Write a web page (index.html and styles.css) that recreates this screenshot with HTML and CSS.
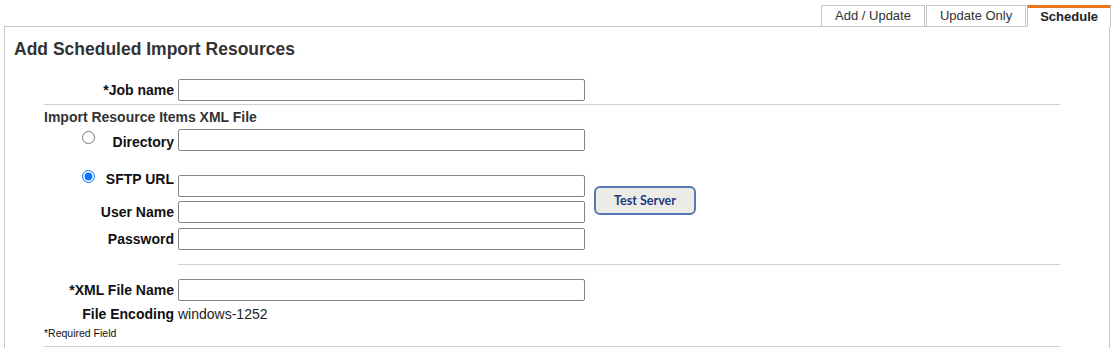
FILE: index.html
```html
<!DOCTYPE html>
<html>
<head>
<meta charset="utf-8">
<link rel="stylesheet" href="styles.css">
</head>
<body>
<div class="tabs">
  <div class="tab">Add / Update</div>
  <div class="tab">Update Only</div>
  <div class="tab active">Schedule</div>
</div>
<div class="panel">
  <h1 class="title">Add Scheduled Import Resources</h1>
  <div class="form">
    <div class="row row-job">
      <label class="lbl">*Job name</label>
      <input class="inp" type="text">
    </div>
    <div class="sep"></div>
    <div class="section">Import Resource Items XML File</div>
    <div class="row row-dir">
      <label class="lbl radio-lbl"><input class="radio" type="radio" name="src"><span>Directory</span></label>
      <input class="inp" type="text">
    </div>
    <div class="sftp">
      <label class="lbl radio-lbl sftp-lbl"><input class="radio" type="radio" name="src" checked><span>SFTP URL</span></label>
      <input class="inp sftp-inp" type="text">
      <label class="lbl user-lbl">User Name</label>
      <input class="inp user-inp" type="text">
      <label class="lbl pass-lbl">Password</label>
      <input class="inp pass-inp" type="password">
      <button class="btn" type="button">Test Server</button>
    </div>
    <div class="sep sep-short"></div>
    <div class="row row-xml">
      <label class="lbl">*XML File Name</label>
      <input class="inp" type="text">
    </div>
    <div class="row row-enc">
      <span class="lbl">File Encoding</span>
      <span class="val">windows-1252</span>
    </div>
    <div class="req">*Required Field</div>
    <div class="sep sep-bottom"></div>
  </div>
</div>
</body>
</html>
```

FILE: styles.css
```css
* { box-sizing: border-box; }
body {
  margin: 0;
  font-family: "Liberation Sans", Arial, sans-serif;
  font-size: 13px;
  color: #000;
  background: #fff;
}
.tabs {
  display: flex;
  justify-content: flex-end;
  padding-right: 3px;
  margin-top: 5px;
  position: relative;
  z-index: 1;
  margin-bottom: -1px;
}
.tab {
  height: 22px;
  padding: 0 13px;
  border: 1px solid #c8c8c8;
  line-height: 20px;
  color: #333;
  background: #fff;
  margin-left: 1px;
}
.tab.active {
  border-top: 3px solid #e8761e;
  border-bottom-color: #fff;
  line-height: 17px;
  font-weight: bold;
  color: #222;
  padding: 0 12px 1px;
}
.panel {
  margin: 0 4px;
  border: 1px solid #c8c8c8;
  border-bottom: none;
  height: 330px;
}
.title {
  margin: 11px 0 0 9px;
  font-size: 17.5px;
  line-height: 22px;
  font-weight: bold;
  color: #333;
}
.form {
  margin-left: 39px;
  width: 1016px;
}
.row {
  display: grid;
  grid-template-columns: 130px 407px;
  column-gap: 4px;
  align-items: center;
}
.lbl {
  font-size: 14px;
  font-weight: bold;
  text-align: right;
  line-height: 16px;
  color: #111;
}
.inp {
  height: 22px;
  width: 407px;
  border: 1px solid #858585;
  border-radius: 2px;
  margin: 0;
  padding: 1px 3px;
  font: 13px "Liberation Sans", Arial, sans-serif;
  background: #fff;
}
.row-job { margin-top: 19px; }
.sep {
  height: 1px;
  background: #d0d0d0;
  margin-top: 3px;
}
.section {
  margin-top: 4px;
  font-size: 14px;
  font-weight: bold;
  line-height: 16px;
  color: #333;
}
.radio-lbl {
  display: flex;
  align-items: center;
  justify-content: flex-end;
  padding-left: 38px;
}
.radio {
  width: 13px;
  height: 13px;
  margin: 0 auto 0 0;
  accent-color: #0b74ff;
}
.row-dir { margin-top: 4px; }
.row-dir .radio { position: relative; top: -3px; }
.row-dir .radio-lbl span { position: relative; top: 2px; }
.sftp {
  display: grid;
  grid-template-columns: 130px 407px auto;
  column-gap: 4px;
  margin-top: 19px;
  align-items: center;
}
.sftp-lbl { grid-column: 1; grid-row: 1; align-self: start; align-items: flex-start; }
.sftp-lbl .radio { margin-top: 0; }
.sftp-lbl span { margin-top: 1px; }
.sftp-inp { grid-column: 2; grid-row: 1; margin-top: 5px; }
.user-lbl { grid-column: 1; grid-row: 2; margin-top: 4px; }
.user-inp { grid-column: 2; grid-row: 2; margin-top: 4px; }
.pass-lbl { grid-column: 1; grid-row: 3; margin-top: 5px; }
.pass-inp { grid-column: 2; grid-row: 3; margin-top: 5px; }
.btn {
  grid-column: 3;
  grid-row: 1 / span 3;
  align-self: start;
  margin: 16px 0 0 5px;
  width: 102px;
  height: 29px;
  background: #ecece7;
  border: 2px solid #5577b8;
  border-radius: 6px;
  color: #1c3a80;
  font: bold 12.5px Lato, "Liberation Sans", sans-serif;
  padding: 0;
  cursor: pointer;
}
.sep-short {
  margin-top: 14px;
  margin-left: 134px;
}
.row-xml { margin-top: 14px; }
.row-enc { margin-top: 5px; }
.val { line-height: 16px; color: #222; font-size: 14px; }
.req {
  margin-top: 4px;
  font-size: 10.5px;
  line-height: 14px;
  color: #111;
}
.sep-bottom { margin-top: 6px; }
```
